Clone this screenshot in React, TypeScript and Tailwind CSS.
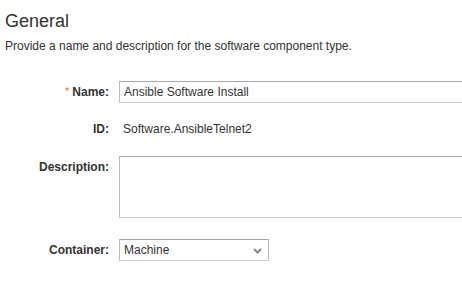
import React from 'react';

const labelCls = 'w-[109px] shrink-0 text-right font-bold text-[12px] leading-[14px] text-[#333]';
const fieldBorder = 'border border-t-[#a9a9a9] border-x-[#bdbdbd] border-b-[#d2d2d2]';

export default function App() {
  return (
    <div
      className="w-[462px] h-[291px] overflow-hidden bg-white text-[#333]"
      style={{ fontFamily: '"Liberation Sans", Arial, sans-serif' }}
    >
      <h1 className="pl-[5px] pt-[11px] text-[18px] leading-[20px] font-normal">General</h1>
      <p className="pl-[5px] mt-[8px] text-[12px] leading-[14px]">
        Provide a name and description for the software component type.
      </p>

      <div className="mt-[28px] flex flex-col">
        {/* Name */}
        <div className="flex items-center">
          <label className={labelCls}>
            <span className="text-[#e8731a] font-normal text-[11px] mr-[3px] relative top-[-1px]">*</span>Name:
          </label>
          <div className={`ml-[10px] h-[22px] w-[360px] shrink-0 ${fieldBorder} flex items-center pl-[4px] text-[12px]`}>
            Ansible Software Install
          </div>
        </div>

        {/* ID */}
        <div className="mt-[15px] flex items-center h-[22px]">
          <label className={labelCls}>ID:</label>
          <span className="ml-[14px] text-[12px]">Software.AnsibleTelnet2</span>
        </div>

        {/* Description */}
        <div className="mt-[16px] flex items-start">
          <label className={`${labelCls} pt-[4px]`}>Description:</label>
          <div className={`ml-[10px] h-[62px] w-[360px] shrink-0 ${fieldBorder}`} />
        </div>

        {/* Container */}
        <div className="mt-[21px] flex items-center">
          <label className={labelCls}>Container:</label>
          <div className={`ml-[10px] h-[22px] w-[150px] ${fieldBorder} flex items-center justify-between pl-[4px] pr-[6px] text-[12px]`}>
            <span>Machine</span>
            <svg width="9" height="6" viewBox="0 0 9 6" className="mt-[1px]">
              <path d="M1 1 L4.5 4.5 L8 1" fill="none" stroke="#8a8a8a" strokeWidth="2" />
            </svg>
          </div>
        </div>
      </div>
    </div>
  );
}
